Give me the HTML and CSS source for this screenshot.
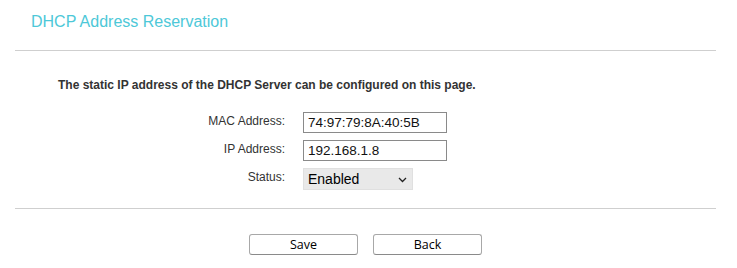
FILE: index.html
```html
<!DOCTYPE html>
<html lang="en">
<head>
    <meta charset="UTF-8">
    <title>DHCP Address Reservation</title>
    <link rel="stylesheet" href="styles.css">
</head>
<body>
    <div class="page">
        <h1 class="title">DHCP Address Reservation</h1>
        <hr class="divider">

        <p class="intro">The static IP address of the DHCP Server can be configured on this page.</p>

        <div class="form-grid">
            <label class="form-label" for="mac">MAC Address:</label>
            <input class="text-input" id="mac" type="text" value="74:97:79:8A:40:5B">

            <label class="form-label" for="ip">IP Address:</label>
            <input class="text-input" id="ip" type="text" value="192.168.1.8">

            <label class="form-label" for="status">Status:</label>
            <div class="select-wrap">
                <select class="select-input" id="status">
                    <option selected>Enabled</option>
                    <option>Disabled</option>
                </select>
                <svg class="chevron" width="9" height="6" viewBox="0 0 9 6">
                    <path d="M1 1 L4.5 4.5 L8 1" fill="none" stroke="#222" stroke-width="1.3"/>
                </svg>
            </div>
        </div>

        <hr class="divider divider-bottom">

        <div class="action-buttons">
            <button class="btn">Save</button>
            <button class="btn">Back</button>
        </div>
    </div>
</body>
</html>
```

FILE: styles.css
```css
* {
    margin: 0;
    padding: 0;
    box-sizing: border-box;
}

body {
    font-family: "Liberation Sans", Arial, sans-serif;
    background: #fff;
    color: #333;
    width: 737px;
    height: 268px;
    overflow: hidden;
}

.page {
    padding: 0 21px 0 15px;
}

.title {
    font-size: 16px;
    font-weight: normal;
    color: #4dc8d8;
    padding: 13px 0 0 16px;
    height: 50px;
    line-height: 18px;
}

.divider {
    border: none;
    border-top: 1px solid #cfcfcf;
    height: 0;
}

.intro {
    font-size: 12px;
    font-weight: bold;
    color: #333;
    padding: 27px 0 0 43px;
    line-height: 14px;
    height: 61px;
}

.form-grid {
    display: grid;
    grid-template-columns: 270px auto;
    column-gap: 18px;
    row-gap: 7px;
    align-items: center;
    justify-items: start;
}

.form-label {
    justify-self: end;
    font-size: 12px;
    color: #333;
    line-height: 14px;
    margin-top: -4px;
}

.text-input {
    width: 144px;
    height: 21px;
    border: 1px solid #8a8a8a;
    padding: 0 4px;
    font-family: "Liberation Sans", Arial, sans-serif;
    font-size: 13.5px;
    color: #111;
    background: #fff;
    outline: none;
}

.select-wrap {
    position: relative;
    width: 110px;
    height: 22px;
}

.select-input {
    appearance: none;
    -webkit-appearance: none;
    width: 110px;
    height: 22px;
    border: 1px solid #e0e0e0;
    background: #e9e9e9;
    padding: 0 4px;
    font-family: "Liberation Sans", Arial, sans-serif;
    font-size: 14px;
    color: #000;
    outline: none;
}

.chevron {
    position: absolute;
    right: 6px;
    top: 9px;
    pointer-events: none;
}

.divider-bottom {
    margin-top: 18px;
}

.action-buttons {
    display: flex;
    justify-content: center;
    gap: 15px;
    padding-top: 25px;
}

.btn {
    width: 109px;
    height: 21px;
    border: 1px solid #a8a8a8;
    border-bottom-color: #8a8a8a;
    border-radius: 3px;
    background: #fff;
    font-family: "Open Sans", "Noto Sans", sans-serif;
    font-size: 12.5px;
    color: #000;
    cursor: pointer;
}
```
